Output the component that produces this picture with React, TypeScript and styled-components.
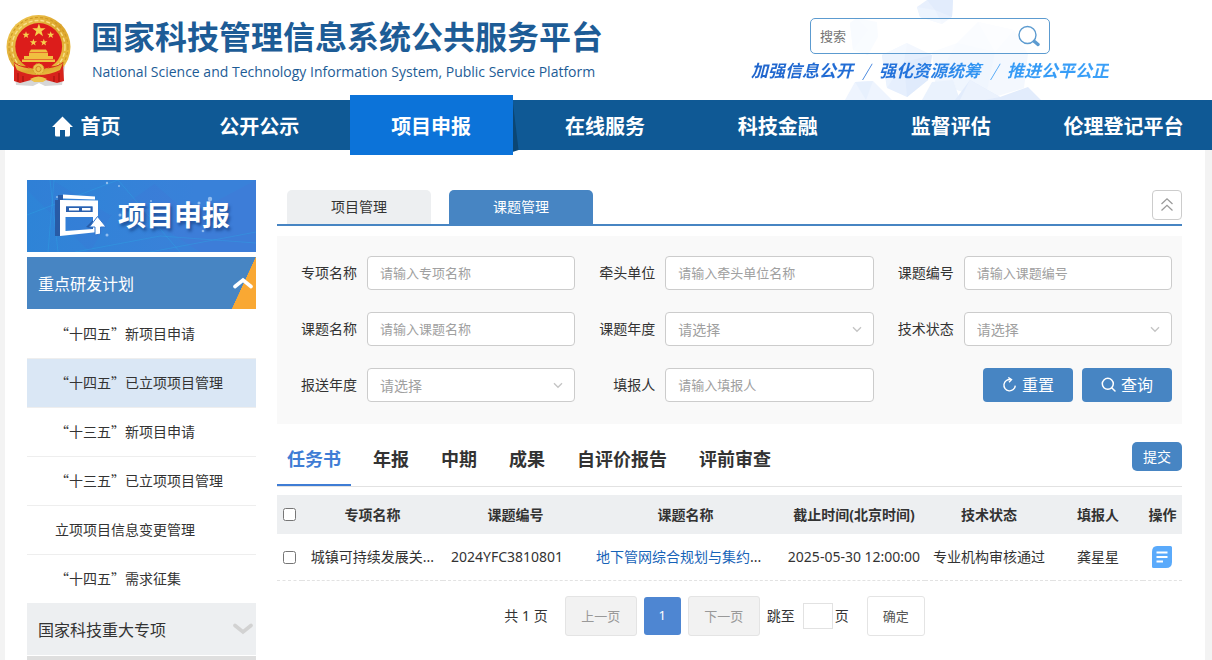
import React from "react";
import styled, { createGlobalStyle } from "styled-components";

const blue = "#4785c3";
const latinFirst = `"Noto Sans", "Noto Sans CJK SC", sans-serif`;
const cjkFirst = `"Noto Sans CJK SC", "Noto Sans", sans-serif`;

const GlobalStyle = createGlobalStyle`
  *, *::before, *::after { box-sizing: border-box; }
  body { margin: 0; background: #f3f3f3; color: #333; font: 14px/20px ${latinFirst}; }
  button, input, select { font-family: inherit; margin: 0; }
  button { cursor: pointer; }
  a { color: inherit; text-decoration: none; }
  ul { list-style: none; margin: 0; padding: 0; }
  svg { display: block; flex: none; }
`;

/* ---------- header ---------- */
const Header = styled.header`
  position: relative;
  height: 100px;
  display: flex;
  justify-content: space-between;
  padding: 14px 103px 0 6px;
  background: #fff;
`;
const Backdrop = styled.svg`
  position: absolute;
  top: 0;
  right: 157px;
`;
const Brand = styled.div`
  display: flex;
  gap: 20px;
`;
const BrandText = styled.div`
  display: flex;
  flex-direction: column;
  gap: 7px;
`;
const SiteTitle = styled.h1`
  margin: 0;
  font: bold 32px/42px ${cjkFirst};
  color: #1d5c96;
  white-space: nowrap;
`;
const SiteSubtitle = styled.p`
  margin: 0;
  padding-left: 1px;
  font: 14px/18px "Open Sans", "Noto Sans", sans-serif;
  color: #1d5c96;
  white-space: nowrap;
`;
const SearchArea = styled.div`
  position: relative;
  display: flex;
  flex-direction: column;
  align-items: center;
  gap: 3px;
  padding-top: 4px;
`;
const SearchBox = styled.form`
  display: flex;
  align-items: center;
  width: 240px;
  height: 36px;
  padding: 0 9px;
  border: 1px solid #5c9bd0;
  border-radius: 5px;
  background: rgba(255, 255, 255, 0.5);
`;
const SearchInput = styled.input`
  flex: 1;
  min-width: 0;
  padding: 0;
  border: 0;
  outline: 0;
  background: none;
  font-size: 13px;
  &::placeholder { color: #757575; }
`;
const IconButton = styled.button`
  padding: 0;
  border: 0;
  background: none;
`;
const Slogan = styled.p`
  display: flex;
  justify-content: space-between;
  width: 358px;
  margin: 0;
  font: italic bold 17px/26px ${cjkFirst};
  color: transparent;
  background: linear-gradient(90deg, #2065cc 0%, #2373dc 45%, #3399f5 65%, #3ba0f8 100%);
  background-clip: text;
  -webkit-background-clip: text;
`;
const Slash = styled.span`
  font-weight: 300;
`;

/* ---------- navigation ---------- */
const Nav = styled.nav`
  display: grid;
  grid-template-columns: repeat(7, 1fr);
  grid-template-rows: 50px;
  padding-right: 2px;
  background: #0f5995;
`;
const NavItem = styled.a<{ $active?: boolean }>`
  position: relative;
  display: flex;
  align-items: center;
  justify-content: center;
  gap: 7px;
  padding-top: 2px;
  font: bold 20px/30px ${cjkFirst};
  color: #fff;
  white-space: nowrap;
  ${(p) =>
    p.$active &&
    `margin: -5px 6px -5px 4px;
     background: #0c73d9;
     &::after {
       content: "";
       position: absolute;
       left: 100%;
       top: 5px;
       width: 6px;
       height: 52px;
       background: #0b4674;
       clip-path: polygon(0 0, 100% 96%, 0 100%);
     }`}
`;

/* ---------- page body ---------- */
const Page = styled.div`
  display: flex;
  gap: 21px;
  min-height: calc(100vh - 150px);
  margin: 0 7px 0 5px;
  padding: 30px 23px 0 22px;
  background: #fff;
`;
const Sidebar = styled.aside`
  flex: none;
  width: 229px;
`;
const Banner = styled.div`
  position: relative;
  display: flex;
  align-items: center;
  height: 72px;
  margin-bottom: 5px;
  padding-bottom: 4px;
  overflow: hidden;
  background: linear-gradient(100deg, #2f80d6, #3d7dd8 70%);
`;
const BannerArt = styled.svg`
  position: absolute;
  inset: 0;
`;
const BannerTitle = styled.h2`
  position: relative;
  margin: 0 0 0 91px;
  font: bold 28px/40px ${cjkFirst};
  color: #fff;
  text-shadow: 2px 3px 3px rgba(16, 55, 120, 0.6);
`;
const GroupHead = styled.button<{ $open?: boolean }>`
  position: relative;
  display: flex;
  align-items: center;
  justify-content: space-between;
  width: 100%;
  height: 52px;
  padding: 0 3px 0 11px;
  border: 0;
  font-size: 16px;
  color: ${(p) => (p.$open ? "#fff" : "#333")};
  background: ${(p) =>
    p.$open ? `linear-gradient(to top left, #f9a833 50%, ${blue} 51%) right / 24px 100% no-repeat ${blue}` : "#edeff1"};
`;
const GroupEdge = styled.div`
  height: 4px;
  margin-top: 1px;
  background: #dfdfdf;
`;
const MenuLink = styled.a<{ $active?: boolean }>`
  display: block;
  height: 49px;
  padding-left: 28px;
  border-top: 1px solid #eee;
  font: 14px/46px ${cjkFirst};
  background: ${(p) => (p.$active ? "#dae7f5" : "#fff")};
  li:first-child > & { border-top-color: #fff; }
`;
const Main = styled.main`
  flex: 1;
  min-width: 0;
`;

/* ---------- manage tabs ---------- */
const TopTabs = styled.div`
  display: flex;
  align-items: flex-start;
  gap: 18px;
  height: 46px;
  margin-bottom: 10px;
  padding: 10px 0 0 10px;
  border-bottom: 2px solid ${blue};
`;
const TopTab = styled.button<{ $active?: boolean }>`
  width: 144px;
  height: 34px;
  padding: 0 0 2px;
  border: 0;
  border-radius: 5px 5px 0 0;
  font-size: 14px;
  color: ${(p) => (p.$active ? "#fff" : "#333")};
  background: ${(p) => (p.$active ? blue : "#edeff1")};
`;
const CollapseButton = styled.button`
  display: grid;
  place-items: center;
  width: 30px;
  height: 30px;
  margin-left: auto;
  padding: 0;
  border: 1px solid #ccc;
  border-radius: 4px;
  background: #fff;
`;

/* ---------- filter form ---------- */
const FilterForm = styled.form`
  display: grid;
  grid-template-columns: repeat(3, 1fr);
  row-gap: 22px;
  padding: 20px 10px 22px 0;
  background: #f9f9f9;
`;
const Field = styled.label`
  display: grid;
  grid-template-columns: 80px 1fr;
  column-gap: 10px;
  align-items: center;
`;
const FieldName = styled.span`
  text-align: right;
`;
const Control = styled.span`
  position: relative;
  display: block;
  height: 34px;
  & > svg {
    position: absolute;
    top: 14px;
    right: 12px;
    pointer-events: none;
  }
`;
const TextInput = styled.input`
  width: 100%;
  height: 34px;
  padding: 0 12px;
  border: 1px solid #ccc;
  border-radius: 4px;
  background: #fff;
  font-size: 13px;
  &::placeholder { color: #a0a0a0; }
`;
const Select = styled.select`
  appearance: none;
  width: 100%;
  height: 34px;
  padding: 0 12px;
  border: 1px solid #ccc;
  border-radius: 4px;
  background: #fff;
  font-size: 14px;
  color: #a0a0a0;
`;
const FormActions = styled.div`
  display: flex;
  justify-content: flex-end;
  gap: 9px;
`;
const ActionButton = styled.button`
  display: flex;
  align-items: center;
  justify-content: center;
  gap: 5px;
  width: 90px;
  height: 34px;
  padding: 0 0 2px;
  border: 0;
  border-radius: 4px;
  background: ${blue};
  color: #fff;
  font-size: 16px;
`;

/* ---------- document tabs ---------- */
const DocBar = styled.div`
  display: flex;
  justify-content: space-between;
  height: 63px;
  padding-top: 18px;
  margin-bottom: 8px;
  border-bottom: 1px solid #e2e2e2;
`;
const DocTabs = styled.div`
  display: flex;
  gap: 12px;
`;
const DocTab = styled.button<{ $active?: boolean }>`
  height: 44px;
  padding: 0 10px 10px;
  border: 0;
  border-bottom: 2px solid ${(p) => (p.$active ? "#3f7dd5" : "transparent")};
  background: none;
  font: bold 18px/26px ${cjkFirst};
  color: ${(p) => (p.$active ? "#3f7dd5" : "#333")};
`;
const SubmitButton = styled.button`
  width: 50px;
  height: 29px;
  padding: 0 0 2px;
  border: 0;
  border-radius: 5px;
  background: ${blue};
  color: #fff;
  font-size: 14px;
`;

/* ---------- table ---------- */
const Table = styled.table`
  width: 100%;
  table-layout: fixed;
  border-collapse: separate;
  border-spacing: 0;
  text-align: center;
`;
const Th = styled.th`
  height: 39px;
  padding: 0;
  background: #edeff1;
  font-weight: bold;
  white-space: nowrap;
`;
const Td = styled.td<{ $start?: boolean }>`
  height: 47px;
  padding: ${(p) => (p.$start ? "0 0 0 8px" : "0")};
  border-bottom: 1px dashed #e2e2e2;
  text-align: ${(p) => (p.$start ? "left" : "center")};
  white-space: nowrap;
`;
const Check = styled.input`
  display: block;
  width: 13px;
  height: 13px;
  margin: 0 auto;
`;
const TopicLink = styled.a`
  color: #1763b8;
`;
const RowAction = styled(IconButton)`
  display: block;
  margin: 0 auto;
`;

/* ---------- pagination ---------- */
const Pagination = styled.div`
  display: flex;
  align-items: center;
  justify-content: center;
  gap: 7px;
  padding: 15px 0 24px;
  margin-right: 30px;
`;
const PageTotal = styled.span`
  margin-right: 10px;
`;
const PageButton = styled.button<{ $kind?: "current" | "confirm" }>`
  width: ${(p) => (p.$kind === "current" ? 37 : p.$kind === "confirm" ? 58 : 72)}px;
  height: ${(p) => (p.$kind === "current" ? 38 : 40)}px;
  padding: 0 0 2px;
  border: ${(p) => (p.$kind === "current" ? "0" : "1px solid #e4e4e4")};
  border-radius: 3px;
  font-size: 13px;
  color: ${(p) => (p.$kind === "current" ? "#fff" : p.$kind === "confirm" ? "#555" : "#999")};
  background: ${(p) => (p.$kind === "current" ? "#4e86d2" : p.$kind === "confirm" ? "#fff" : "#f2f2f2")};
`;
const JumpLabel = styled.label`
  display: flex;
  align-items: center;
  gap: 8px;
`;
const JumpInput = styled.input`
  width: 30px;
  height: 26px;
  padding: 0 4px;
  border: 1px solid #e2e2e2;
`;
const PageUnit = styled.span`
  margin: 0 11px 0 -5px;
`;

/* ---------- drawings ---------- */
const star = (cx: number, cy: number, r: number) =>
  Array.from({ length: 10 }, (_, i) => {
    const a = -Math.PI / 2 + (i * Math.PI) / 5;
    const d = i % 2 ? r * 0.4 : r;
    return `${(cx + d * Math.cos(a)).toFixed(2)},${(cy + d * Math.sin(a)).toFixed(2)}`;
  }).join(" ");

const Emblem = () => (
  <svg width="65" height="74" viewBox="6 14 65 74" role="img" aria-label="国徽">
    <defs>
      <linearGradient id="gold" x1="0" y1="0" x2="1" y2="1">
        <stop offset="0" stopColor="#f3cf5a" />
        <stop offset="0.5" stopColor="#dca42c" />
        <stop offset="1" stopColor="#f0c548" />
      </linearGradient>
    </defs>
    <path d="M14 68 L16 85 L33 86 L39 83 L45 86 L62 85 L65 66Z" fill="#bbb" opacity="0.6" />
    <ellipse cx="38.5" cy="47" rx="32" ry="32" fill="url(#gold)" />
    <circle cx="38.5" cy="47" r="29.5" fill="none" stroke="#cf9a26" strokeWidth="1.2" strokeDasharray="3 2.2" />
    <circle cx="38.5" cy="47" r="26.5" fill="none" stroke="#f8e08a" strokeWidth="1.4" strokeDasharray="4 2" />
    <circle cx="38.7" cy="46.5" r="23.4" fill="#dc1d1b" />
    <polygon points={star(38.9, 30.5, 7)} fill="#f6d04c" />
    <polygon points={star(26, 35, 3.8)} fill="#f6d04c" />
    <polygon points={star(50.7, 35, 3.8)} fill="#f6d04c" />
    <polygon points={star(33.4, 42.5, 3.8)} fill="#f6d04c" />
    <polygon points={star(43.8, 42.5, 3.8)} fill="#f6d04c" />
    <path d="M31 49.5h15l2 3H29ZM29 53h19v3h5v3H24v-3h5ZM22 59.500h33v2.500H22Z" fill="#f0c040" />
    <path d="M14 62 Q20 67 27 66 L33 72 L38.500 73 L44 72 L50 66 Q57 67 63 62 L64 81 L57 83 L46 80 L38.500 82 L31 80 L20 83 L14 81Z" fill="#d8231c" />
    <path d="M14 63 Q22 69 38.500 69 Q55 69 63 63 L60 70 Q50 75 38.500 75 Q27 75 17 70Z" fill="url(#gold)" />
    <circle cx="38.5" cy="69" r="5.5" fill="#edc24c" stroke="#cf9a26" strokeWidth="1" strokeDasharray="1.6 1.2" />
    <circle cx="38.5" cy="69" r="2.6" fill="none" stroke="#cf8a20" strokeWidth="1" />
    <path d="M30 79 Q38.500 74 47 79 L43 82 H34Z" fill="#edc24c" />
    <path d="M18 73v9M23 76v6M54 76v6M59 73v9" stroke="#a81410" strokeWidth="1.2" />
  </svg>
);

const HeaderBackdrop = () => (
  <Backdrop width="220" height="100" viewBox="835 0 220 100" aria-hidden="true">
    <polygon points="917,7 927,0 953,0 952,17 942,24 920,17" fill="#e8f0fd" />
    <polygon points="927,0 935,10 952,17 953,0" fill="#e2ecfc" />
    <polygon points="917,7 935,10 942,24 920,17" fill="#edf4fe" />
    <polygon points="850,23 857,18 877,22 878,37 868,55 853,50" fill="#f3f8fe" />
    <polygon points="857,18 868,30 853,50 850,23" fill="#f0f6fe" />
    <polygon points="932,52 957,43 978,22 1014,30 1028,54 1024,88 985,100 935,82" fill="#f4f8fe" />
    <polygon points="978,22 1014,30 995,52" fill="#f9fbff" />
    <polygon points="957,43 995,52 985,100 935,82" fill="#f0f6fe" />
    <polygon points="882,55 907,43 932,55 928,80 907,97 887,88" fill="#e6effd" />
    <polygon points="882,55 907,43 904,62 887,88" fill="#ebf3fe" />
    <polygon points="904,62 932,55 928,80 907,97" fill="#e0ebfc" />
    <polygon points="845,100 855,82 873,81 892,100" fill="#eef4fe" />
    <polygon points="855,82 873,81 866,100" fill="#e7f0fd" />
    <polygon points="922,100 932,82 953,80 960,100" fill="#eaf2fd" />
    <polygon points="955,100 970,80 1000,97 1028,87 1041,100" fill="#e2ecfc" />
    <polygon points="970,80 1000,97 985,100 960,100" fill="#ebf2fd" />
  </Backdrop>
);

const BannerDrawing = () => (
  <BannerArt width="229" height="72" viewBox="27 180 229 72" aria-hidden="true">
    <g fill="#25a0e0" opacity="0.13">
      <polygon points="27,190 90,252 27,252" />
      <polygon points="52,180 160,180 110,215" />
      <polygon points="120,200 200,252 90,252" />
      <polygon points="150,180 190,215 256,180" />
    </g>
    <g stroke="#2ea9e4" strokeWidth="1" opacity="0.35" fill="none">
      <path d="M50 180L58 252M54 180L48 252M27 215L118 180M75 252L160 236L256 243M118 180L180 252M150 252L256 232" />
    </g>
    <g fill="#a9cdf5" opacity="0.8">
      <circle cx="107" cy="183" r="1.2" /><circle cx="119" cy="186" r="1" />
      <circle cx="151" cy="201" r="1" /><circle cx="210" cy="199" r="2.2" />
      <circle cx="199" cy="203" r="1.5" /><circle cx="107" cy="235" r="1.5" />
      <circle cx="203" cy="231" r="1.3" /><circle cx="120" cy="215" r="1.5" />
      <circle cx="57" cy="197" r="1" />
    </g>
    <path d="M55 200H60V236H55ZM58 195H63V200H58ZM86 227L97 216V230Z" fill="#285ba6" />
    <path d="M63 194.500L95 196.500V199.500L63 198.500Z" fill="#fff" />
    <path fillRule="evenodd" d="M60 200L98 200.500V232L60 236ZM66 206.500V212H92.500V206.500ZM65.500 217V231L93 229V217Z" fill="#fff" />
    <path d="M66 206.500H92.500V212H66Z" fill="#2a60ae" />
    <path d="M69 208H79V210.500H69ZM82 208H90.500V210.500H82Z" fill="#fff" />
    <path d="M97.500 216.500L106 227H100.500V234L95 235V227H89.500Z" fill="#fff" stroke="#3378cf" strokeWidth="1" />
  </BannerArt>
);

const HomeIcon = () => (
  <svg width="21" height="21" viewBox="0 0 21 21" fill="#fff" aria-hidden="true">
    <path d="M10.500 0.500L21 11H18V19Q18 20.500 16.500 20.500H13V14H8V20.500H4.500Q3 20.500 3 19V11H0Z" />
  </svg>
);

const Magnifier = () => (
  <svg width="22" height="22" viewBox="0 0 22 22" fill="none" stroke="#5c9bd0" aria-hidden="true">
    <circle cx="9.500" cy="10" r="8.500" strokeWidth="1.4" />
    <path d="M15 15.500L16.500 17" strokeWidth="2" />
    <path d="M16.500 16.500L20 19.500" strokeWidth="3.4" strokeLinecap="round" />
  </svg>
);

const ThickChevron = ({ up }: { up?: boolean }) => (
  <svg width="20" height="12" viewBox="0 0 20 12" fill="none" stroke={up ? "#fff" : "#d2d2d2"} strokeWidth="3.6" strokeLinecap="round" aria-hidden="true">
    <path d={up ? "M2 9.500L10 3L18 9.500" : "M2 2.500L10 9L18 2.500"} />
  </svg>
);

const SelectChevron = () => (
  <svg width="10" height="7" viewBox="0 0 10 7" fill="none" stroke="#c4c4c4" strokeWidth="1.3" aria-hidden="true">
    <path d="M1 1.300L5 5.300L9 1.300" />
  </svg>
);

const DoubleUp = () => (
  <svg width="14" height="16" viewBox="0 0 14 16" fill="none" stroke="#9a9a9a" strokeWidth="1.3" aria-hidden="true">
    <path d="M1.500 7L7 1.800L12.500 7M1.500 13.500L7 8.300L12.500 13.500" />
  </svg>
);

const ResetIcon = () => (
  <svg width="15" height="15" viewBox="0 0 15 15" fill="none" stroke="#fff" strokeWidth="1.4" aria-hidden="true">
    <path d="M8.800 2.600A5.700 5.700 0 1 0 13.300 8.600" />
    <path d="M6.300 0.500L9.500 2.700L7 5.200" />
  </svg>
);

const QueryIcon = () => (
  <svg width="15" height="15" viewBox="0 0 15 15" fill="none" stroke="#fff" strokeWidth="1.5" strokeLinecap="round" aria-hidden="true">
    <circle cx="6.800" cy="6.800" r="5.500" />
    <path d="M11 11L14 14" />
  </svg>
);

const DocIcon = () => (
  <svg width="20" height="22" viewBox="0 0 20 22" aria-hidden="true">
    <path d="M5 0H18.500Q20 0 20 1.500V16Q20 22 14 22H1.500Q0 22 0 20.500V6Q0 0 5 0Z" fill="#5aaafb" />
    <path d="M4.500 6.500H15.500M4.500 11H15.500M4.500 15.500H11" stroke="#fff" strokeWidth="1.800" />
  </svg>
);

/* ---------- data ---------- */
const navItems = ["首页", "公开公示", "项目申报", "在线服务", "科技金融", "监督评估", "伦理登记平台"];
const menu = [
  "“十四五”新项目申请",
  "“十四五”已立项项目管理",
  "“十三五”新项目申请",
  "“十三五”已立项项目管理",
  "立项项目信息变更管理",
  "“十四五”需求征集",
];
const fields: { name: string; hint?: string }[] = [
  { name: "专项名称", hint: "请输入专项名称" },
  { name: "牵头单位", hint: "请输入牵头单位名称" },
  { name: "课题编号", hint: "请输入课题编号" },
  { name: "课题名称", hint: "请输入课题名称" },
  { name: "课题年度" },
  { name: "技术状态" },
  { name: "报送年度" },
  { name: "填报人", hint: "请输入填报人" },
];
const docTabs = ["任务书", "年报", "中期", "成果", "自评价报告", "评前审查"];
const columns = ["专项名称", "课题编号", "课题名称", "截止时间(北京时间)", "技术状态", "填报人", "操作"];
const columnWidths = [25, 141, 145, 195, 142, 128, 90, 39];

export default function App() {
  return (
    <>
      <GlobalStyle />
      <Header>
        <HeaderBackdrop />
        <Brand>
          <Emblem />
          <BrandText>
            <SiteTitle>国家科技管理信息系统公共服务平台</SiteTitle>
            <SiteSubtitle>National Science and Technology Information System, Public Service Platform</SiteSubtitle>
          </BrandText>
        </Brand>
        <SearchArea>
          <SearchBox>
            <SearchInput placeholder="搜索" aria-label="搜索" />
            <IconButton type="button" aria-label="搜索"><Magnifier /></IconButton>
          </SearchBox>
          <Slogan>
            <span>加强信息公开</span>
            <Slash>/</Slash>
            <span>强化资源统筹</span>
            <Slash>/</Slash>
            <span>推进公平公正</span>
          </Slogan>
        </SearchArea>
      </Header>

      <Nav>
        {navItems.map((item, i) => (
          <NavItem key={item} href="#" $active={i === 2}>
            {i === 0 && <HomeIcon />}
            {item}
          </NavItem>
        ))}
      </Nav>

      <Page>
        <Sidebar>
          <Banner>
            <BannerDrawing />
            <BannerTitle>项目申报</BannerTitle>
          </Banner>
          <GroupHead type="button" $open>重点研发计划<ThickChevron up /></GroupHead>
          <ul>
            {menu.map((item, i) => (
              <li key={item}><MenuLink href="#" $active={i === 1}>{item}</MenuLink></li>
            ))}
          </ul>
          <GroupHead type="button">国家科技重大专项<ThickChevron /></GroupHead>
          <GroupEdge />
        </Sidebar>

        <Main>
          <TopTabs>
            <TopTab type="button">项目管理</TopTab>
            <TopTab type="button" $active>课题管理</TopTab>
            <CollapseButton type="button" aria-label="收起"><DoubleUp /></CollapseButton>
          </TopTabs>

          <FilterForm>
            {fields.map((f) => (
              <Field key={f.name}>
                <FieldName>{f.name}</FieldName>
                <Control>
                  {f.hint ? (
                    <TextInput placeholder={f.hint} />
                  ) : (
                    <>
                      <Select><option>请选择</option></Select>
                      <SelectChevron />
                    </>
                  )}
                </Control>
              </Field>
            ))}
            <FormActions>
              <ActionButton type="reset"><ResetIcon />重置</ActionButton>
              <ActionButton type="button"><QueryIcon />查询</ActionButton>
            </FormActions>
          </FilterForm>

          <DocBar>
            <DocTabs>
              {docTabs.map((t, i) => (
                <DocTab key={t} type="button" $active={i === 0}>{t}</DocTab>
              ))}
            </DocTabs>
            <SubmitButton type="button">提交</SubmitButton>
          </DocBar>

          <Table>
            <colgroup>
              {columnWidths.map((w, i) => <col key={i} style={{ width: `${(w / 905) * 100}%` }} />)}
            </colgroup>
            <thead>
              <tr>
                <Th><Check type="checkbox" aria-label="全选" /></Th>
                {columns.map((c) => <Th key={c}>{c}</Th>)}
              </tr>
            </thead>
            <tbody>
              <tr>
                <Td><Check type="checkbox" aria-label="选择该行" /></Td>
                <Td>城镇可持续发展关...</Td>
                <Td $start>2024YFC3810801</Td>
                <Td $start><TopicLink href="#">地下管网综合规划与集约</TopicLink>...</Td>
                <Td>2025-05-30 12:00:00</Td>
                <Td>专业机构审核通过</Td>
                <Td>龚星星</Td>
                <Td><RowAction type="button" aria-label="查看"><DocIcon /></RowAction></Td>
              </tr>
            </tbody>
          </Table>

          <Pagination>
            <PageTotal>共 1 页</PageTotal>
            <PageButton type="button">上一页</PageButton>
            <PageButton type="button" $kind="current">1</PageButton>
            <PageButton type="button">下一页</PageButton>
            <JumpLabel>跳至<JumpInput type="text" /></JumpLabel>
            <PageUnit>页</PageUnit>
            <PageButton type="button" $kind="confirm">确定</PageButton>
          </Pagination>
        </Main>
      </Page>
    </>
  );
}
